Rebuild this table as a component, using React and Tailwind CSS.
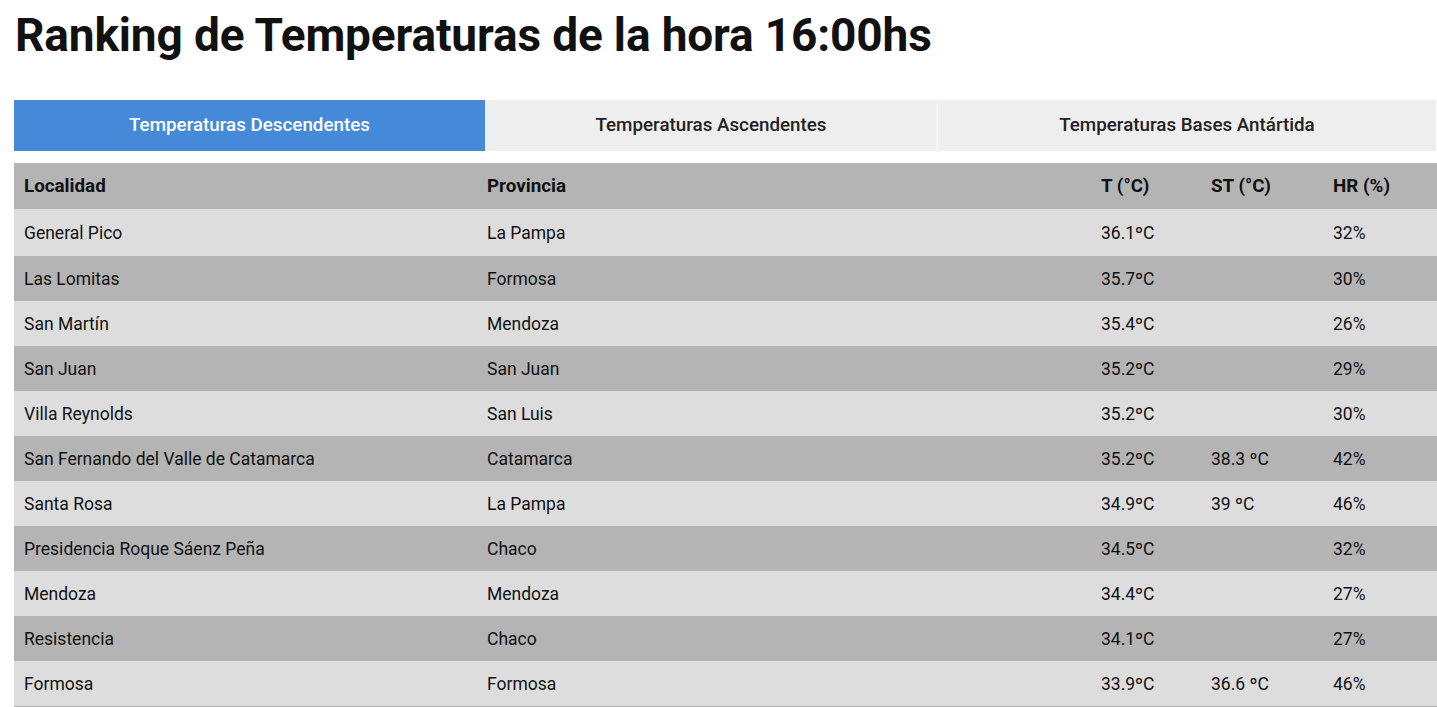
const tabs = [
  { label: 'Temperaturas Descendentes', w: 'w-[471px]', active: true },
  { label: 'Temperaturas Ascendentes', w: 'w-[453px]' },
  { label: 'Temperaturas Bases Antártida', w: 'flex-1' },
];

const rows = [
  ['General Pico', 'La Pampa', '36.1ºC', '', '32%'],
  ['Las Lomitas', 'Formosa', '35.7ºC', '', '30%'],
  ['San Martín', 'Mendoza', '35.4ºC', '', '26%'],
  ['San Juan', 'San Juan', '35.2ºC', '', '29%'],
  ['Villa Reynolds', 'San Luis', '35.2ºC', '', '30%'],
  ['San Fernando del Valle de Catamarca', 'Catamarca', '35.2ºC', '38.3 ºC', '42%'],
  ['Santa Rosa', 'La Pampa', '34.9ºC', '39 ºC', '46%'],
  ['Presidencia Roque Sáenz Peña', 'Chaco', '34.5ºC', '', '32%'],
  ['Mendoza', 'Mendoza', '34.4ºC', '', '27%'],
  ['Resistencia', 'Chaco', '34.1ºC', '', '27%'],
  ['Formosa', 'Formosa', '33.9ºC', '36.6 ºC', '46%'],
];

export default function App() {
  return (
    <div className="min-h-screen bg-white pl-[14px] font-['Roboto',sans-serif] text-[#111]">
      <h1 className="pt-[9px] text-[46px] font-bold leading-[52px] tracking-[-0.15px] pl-[1px]">
        Ranking de Temperaturas de la hora 16:00hs
      </h1>

      {/* Tabs */}
      <div className="mt-[39px] flex w-[1423px] h-[51px]">
        {tabs.map((t) => (
          <div
            key={t.label}
            className={`${t.w} flex items-center justify-center text-[18.8px] font-medium ${
              t.active ? 'bg-[#448ad8] text-white' : 'bg-[#eeeeee] text-[#222] border-r border-white'
            }`}
          >
            {t.label}
          </div>
        ))}
      </div>

      {/* Table */}
      <div className="mt-[12px] w-[1423px] border-b border-[#b3b3b3] text-[17.5px]">
        <div className="flex h-[46px] items-center bg-[#b4b4b4] text-[18.8px] font-bold">
          <div className="w-[473px] pl-[10px]">Localidad</div>
          <div className="w-[614px]">Provincia</div>
          <div className="w-[110px]">T (°C)</div>
          <div className="w-[122px]">ST (°C)</div>
          <div className="flex-1">HR (%)</div>
        </div>
        {rows.map((r, i) => (
          <div
            key={i}
            className={`flex items-center pt-[2px] ${i === 0 ? 'h-[47px]' : 'h-[45px]'} ${
              i % 2 === 0 ? 'bg-[#dddddd]' : 'bg-[#b4b4b4]'
            }`}
          >
            <div className="w-[473px] pl-[10px]">{r[0]}</div>
            <div className="w-[614px]">{r[1]}</div>
            <div className="w-[110px]">{r[2]}</div>
            <div className="w-[122px]">{r[3]}</div>
            <div className="flex-1">{r[4]}</div>
          </div>
        ))}
      </div>
    </div>
  );
}
